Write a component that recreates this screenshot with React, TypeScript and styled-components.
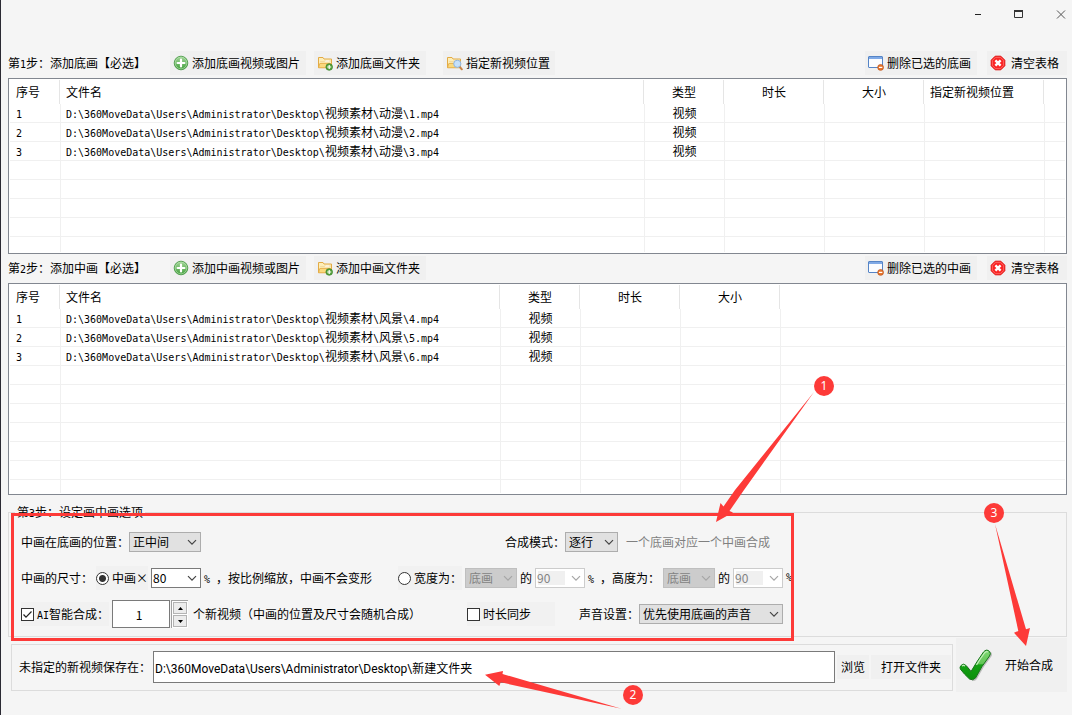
import React, { useState } from 'react';
import styled, { createGlobalStyle } from 'styled-components';

const RED = '#fd3a38';

const GlobalStyle = createGlobalStyle`
  * { box-sizing: border-box; }
  body {
    margin: 0;
    background: #f5f5f5;
  }
  body, button, input, select {
    font-family: 'Noto Sans CJK SC', 'Liberation Sans', sans-serif;
    font-size: 12px;
    line-height: 18px;
    color: #000;
  }
`;

const Window = styled.div`
  position: relative;
  display: flex;
  flex-direction: column;
  min-height: 100vh;
  padding: 0 5px 24px 7px;
  border-left: 1px solid #2b2a33;
  background: #f5f5f5;
  overflow: hidden;
`;

const TitleBar = styled.header`
  display: flex;
  justify-content: flex-end;
  gap: 27px;
  height: 49px;
  padding-top: 7px;
`;

const CaptionButton = styled.button`
  width: 14px;
  height: 14px;
  padding: 0;
  border: 0;
  background: none;
  svg { display: block; }
`;

const Toolbar = styled.div`
  display: flex;
  align-items: center;
  padding: 2px 0 3px;
`;

const StepTitle = styled.h2`
  width: 162px;
  margin: 0;
  font-size: 12px;
  font-weight: 400;
  line-height: 18px;
  white-space: nowrap;
`;

const ToolGroup = styled.div<{ $end?: boolean }>`
  display: flex;
  gap: ${p => (p.$end ? 10 : 8)}px;
  margin-left: ${p => (p.$end ? 'auto' : 0)};
`;

const ToolButton = styled.button<{ $w: number; $before?: number; $gap?: number }>`
  display: flex;
  align-items: center;
  gap: ${p => p.$gap ?? 3}px;
  width: ${p => p.$w}px;
  height: 24px;
  margin: 0 0 0 ${p => p.$before ?? 0}px;
  padding: 0 0 0 3px;
  border: 0;
  background: #f0f0f0;
  white-space: nowrap;
  svg { flex: none; }
`;

const ListView = styled.div`
  padding: 1px;
  border: 1px solid #828790;
  background: #fff;
`;

const Table = styled.table`
  width: 100%;
  table-layout: fixed;
  border-collapse: separate;
  border-spacing: 0;
`;

const Th = styled.th<{ $center?: boolean }>`
  height: 24px;
  padding: 0 5px 0 6px;
  border-right: 1px solid #e5e5e5;
  font-weight: 400;
  line-height: 18px;
  text-align: ${p => (p.$center ? 'center' : 'left')};
  white-space: nowrap;
  &:last-child { border-right: 0; }
`;

const Td = styled.td<{ $center?: boolean }>`
  height: 19px;
  padding: 0 5px;
  border-bottom: 1px solid #f0f0f0;
  line-height: 18px;
  text-align: ${p => (p.$center ? 'center' : 'left')};
  white-space: nowrap;
  & + & { border-left: 1px solid #f0f0f0; }
  &:first-child { padding-left: 6px; }
`;

const Tail = styled.tr<{ $h: number }>`
  td { height: ${p => p.$h}px; border-bottom: 0; }
`;

const Mono = styled.span`
  font-family: 'DejaVu Sans Mono', monospace;
  font-size: 10px;
  line-height: 10px;
  white-space: pre;
`;

const Options = styled.fieldset`
  min-width: 0;
  margin: 10px 0 0;
  padding: 5px 12px 4px;
  border: 1px solid #dcdcdc;
`;

const Legend = styled.legend`
  margin-left: -6px;
  padding: 0 2px;
  line-height: 13px;
`;

const Row = styled.div`
  display: flex;
  align-items: center;
  height: 36px;
  white-space: nowrap;
`;

const Cluster = styled.div<{ $w?: number; $tight?: boolean }>`
  display: flex;
  flex: none;
  align-items: center;
  gap: ${p => (p.$tight ? 0 : 3)}px;
  width: ${p => (p.$w ? p.$w + 'px' : 'auto')};
`;

const Choice = styled.label<{ $w?: number }>`
  display: flex;
  align-items: center;
  gap: 3px;
  width: ${p => (p.$w ? p.$w + 'px' : 'auto')};
  height: 24px;
  background: #f1f1f1;
`;

const Radio = styled.input.attrs({ type: 'radio' })`
  appearance: none;
  width: 13px;
  height: 13px;
  margin: 0;
  border: 1px solid #333;
  border-radius: 50%;
  background: #fff;
  &:checked { background: radial-gradient(circle, #333 0 3px, #fff 4px); }
`;

const CheckFrame = styled.span`
  position: relative;
  display: flex;
  svg {
    position: absolute;
    inset: 0;
    pointer-events: none;
  }
`;

const CheckInput = styled.input.attrs({ type: 'checkbox' })`
  appearance: none;
  width: 13px;
  height: 13px;
  margin: 0;
  border: 1px solid #333;
  background: #fff;
  &:not(:checked) + svg { display: none; }
`;

const Muted = styled.span`
  margin-left: 8px;
  color: #808080;
`;

const SelectFrame = styled.span<{ $w: number }>`
  position: relative;
  display: flex;
  width: ${p => p.$w}px;
  svg {
    position: absolute;
    right: 4px;
    top: 7px;
    pointer-events: none;
  }
`;

const SelectInput = styled.select<{ $editable?: boolean }>`
  appearance: none;
  width: 100%;
  height: 20px;
  padding: 0 0 0 ${p => (p.$editable ? 1 : 3)}px;
  border: 1px solid ${p => (p.$editable ? '#7a7a7a' : '#adadad')};
  border-radius: 0;
  background: ${p => (p.$editable ? '#fff' : '#e1e1e1')};
  &:disabled {
    border-color: ${p => (p.$editable ? '#cccccc' : '#bfbfbf')};
    background: ${p =>
      p.$editable ? 'linear-gradient(#f0f0f0, #f0f0f0) 2px 2px / 27px 14px no-repeat #fff' : '#cccccc'};
    color: #838383;
    opacity: 1;
  }
`;

const Spinner = styled.div`
  display: flex;
  align-items: center;
  gap: 1px;
  margin-right: 2px;
`;

const CountInput = styled.input`
  width: 58px;
  height: 28px;
  padding: 0 4px 0 0;
  border: 1px solid #7a7a7a;
  text-align: center;
`;

const Steps = styled.div`
  display: flex;
  flex-direction: column;
  gap: 1px;
  padding: 1px;
  background: #fff;
  border-left: 1px solid #a0a0a0;
  border-top: 1px solid #a0a0a0;
`;

const StepButton = styled.button`
  display: flex;
  align-items: center;
  justify-content: center;
  width: 14px;
  height: 12px;
  padding: 0;
  border: 1px solid #b4b4b4;
  background: #ececec;
`;

const Footer = styled.div`
  display: flex;
  align-items: center;
  gap: 3px;
  margin: 1px 0 0 3px;
`;

const SaveBox = styled.div`
  display: flex;
  flex: 1;
  align-items: center;
  gap: 2px;
  height: 47px;
  margin-top: 4px;
  padding: 0 1px 0 7px;
  border: 1px solid #dcdcdc;
  white-space: nowrap;
`;

const PathInput = styled.input`
  flex: 1;
  min-width: 0;
  height: 32px;
  padding: 0 1px;
  border: 1px solid #7a7a7a;
  font-family: Roboto, 'Noto Sans CJK SC', sans-serif;
`;

const PlainButton = styled.button<{ $w: number }>`
  width: ${p => p.$w}px;
  height: 24px;
  padding: 0;
  border: 0;
  background: #f0f0f0;
`;

const StartButton = styled.button`
  display: flex;
  align-items: center;
  gap: 12px;
  width: 111px;
  height: 54px;
  padding: 0 0 0 3px;
  border: 0;
  background: #f0f0f0;
  white-space: nowrap;
`;

const Highlight = styled.div`
  position: absolute;
  left: 10px;
  top: 513px;
  width: 783px;
  height: 128px;
  border: 3px solid ${RED};
  pointer-events: none;
`;

const Arrows = styled.svg`
  position: absolute;
  left: -1px;
  top: 0;
  pointer-events: none;
`;

const Badge = styled.span<{ $x: number; $y: number }>`
  position: absolute;
  left: ${p => p.$x}px;
  top: ${p => p.$y}px;
  width: 20px;
  height: 20px;
  border-radius: 50%;
  background: ${RED};
  color: #fff;
  font-family: 'Noto Sans', sans-serif;
  line-height: 20px;
  text-align: center;
`;

const AddIcon = () => (
  <svg width="16" height="16" viewBox="0 0 16 16" aria-hidden="true">
    <defs>
      <linearGradient id="ball" x1="0" y1="0" x2="0" y2="1">
        <stop offset="0" stopColor="#a5d79b" />
        <stop offset="1" stopColor="#3f9e3a" />
      </linearGradient>
    </defs>
    <circle cx="8" cy="8" r="6.8" fill="url(#ball)" stroke="#4b9a48" strokeWidth="0.9" />
    <circle cx="8" cy="8" r="5.8" fill="none" stroke="#b9e2b0" strokeWidth="0.6" />
    <path d="M8 4.6v6.800M4.600 8h6.800" stroke="#fff" strokeWidth="2.200" strokeLinecap="round" />
  </svg>
);

const Folder = () => (
  <>
    <path d="M1.500 12.500V2.500h4.500l1 1.500h7.500v8.500z" fill="#fdeeb8" stroke="#e3ab45" />
    <path d="M3.500 6.500h4l1-1.500h4.500v2H3.500z" fill="#fffdf2" stroke="#eccb80" strokeWidth="0.5" />
    <path d="M1.500 12.800 2.800 8.500H14.500v4.300z" fill="#fad97e" stroke="#e3ab45" strokeWidth="0.8" />
  </>
);

const FolderAddIcon = () => (
  <svg width="16" height="16" viewBox="0 0 16 16" aria-hidden="true">
    <Folder />
    <circle cx="12.200" cy="12" r="3.300" fill="#5aa53f" stroke="#347f26" strokeWidth="0.7" />
    <path d="M12.200 10v4M10.200 12h4" stroke="#fff" strokeWidth="1.200" />
  </svg>
);

const FolderFindIcon = () => (
  <svg width="17" height="16" viewBox="0 0 17 16" aria-hidden="true">
    <Folder />
    <path d="M13.800 11.800 15.800 14.300" stroke="#c98343" strokeWidth="2" strokeLinecap="round" />
    <circle cx="11.300" cy="8.800" r="3.600" fill="#c5e0fa" stroke="#8fb4dc" />
  </svg>
);

const RemoveIcon = () => (
  <svg width="16" height="16" viewBox="0 0 16 16" aria-hidden="true">
    <rect x="0.5" y="1.500" width="14" height="11" rx="0.5" fill="#fafcff" stroke="#5584c6" />
    <path d="M1 2h13v2H1z" fill="#7fa9e6" />
    <circle cx="12.600" cy="12.400" r="2.900" fill="#e8772e" stroke="#b9521a" strokeWidth="0.7" />
    <path d="M10.900 12.400h3.400" stroke="#fff" strokeWidth="1.200" />
  </svg>
);

const ClearIcon = () => (
  <svg width="16" height="16" viewBox="0 0 16 16" aria-hidden="true">
    <path d="M5.200 1.200h5.600L14.800 5.200v5.600L10.800 14.800H5.200L1.200 10.800V5.200z" fill="#fb2525" stroke="#e01010" strokeLinejoin="round" />
    <path d="M5.500 2.400h5L13.600 5.500v5L10.500 13.600h-5L2.400 10.500v-5z" fill="none" stroke="#ff7b74" strokeWidth="0.7" />
    <path d="m5.400 5.400 5.200 5.200M10.600 5.400l-5.200 5.200" stroke="#fff" strokeWidth="2.400" />
  </svg>
);

const BigCheck = () => (
  <svg width="34" height="34" viewBox="0 0 34 34" aria-hidden="true">
    <defs>
      <linearGradient id="tick" x1="0" y1="0" x2="0" y2="1">
        <stop offset="0" stopColor="#7fd873" />
        <stop offset="0.45" stopColor="#62c556" />
        <stop offset="0.5" stopColor="#12a012" />
        <stop offset="1" stopColor="#0b8f0b" />
      </linearGradient>
    </defs>
    <path d="M3 17.500Q5.500 14.800 8 17.500L13 23.500Q18.500 14 25.500 4Q28.500 .5 31.500 3.500Q33.300 5.500 31.500 8Q23.500 18 17.500 30Q14.500 34 11.500 31Q6 26 2.300 21Q1.500 19 3 17.500z" fill="#9a9a9a" opacity="0.6" transform="translate(.6 .8)" />
    <path d="M2 17.500Q4.500 14.800 7 17.500L12 23.500Q17.500 14 24.500 4Q27.500 .5 30.500 3.500Q32.300 5.500 30.500 8Q22.500 18 16.500 30Q13.500 33 10.500 31Q5 26 1.300 21Q.5 19 2 17.500z" fill="url(#tick)" stroke="#17761a" strokeWidth="1" />
    <path d="M3 18.200q1.500-1.500 3 0M17.500 17Q21 11 25.500 5q1.800-2 3.500-1" fill="none" stroke="#c4efbc" strokeWidth="1.200" />
  </svg>
);

const Chevron = ({ color }: { color: string }) => (
  <svg width="10" height="7" viewBox="0 0 10 7" aria-hidden="true">
    <path d="M1 1.200 5 5.200 9 1.200" fill="none" stroke={color} strokeWidth="1.200" />
  </svg>
);

type SelectProps = {
  label: string;
  width: number;
  options: string[];
  editable?: boolean;
  disabled?: boolean;
  id?: string;
};

const Select = ({ label, width, options, editable, disabled, id }: SelectProps) => (
  <SelectFrame $w={width}>
    <SelectInput id={id} aria-label={label} $editable={editable} disabled={disabled}>
      {options.map(o => (
        <option key={o}>{o}</option>
      ))}
    </SelectInput>
    <Chevron color={disabled ? '#a6a6a6' : '#444'} />
  </SelectFrame>
);

const CheckBox = ({ checked }: { checked?: boolean }) => (
  <CheckFrame>
    <CheckInput defaultChecked={checked} />
    <svg width="13" height="13" viewBox="0 0 13 13" aria-hidden="true">
      <path d="M2.500 6.500 5 9.200 10.500 3.500" fill="none" stroke="#222" strokeWidth="1.200" />
    </svg>
  </CheckFrame>
);

type Column = { title: string; width?: number; center?: boolean };

type FileListProps = {
  columns: Column[];
  folder: string;
  files: string[];
  blankRows: number;
  tail: number;
};

const FileList = ({ columns, folder, files, blankRows, tail }: FileListProps) => (
  <ListView>
    <Table>
      <colgroup>
        {columns.map((c, i) => (
          <col key={i} width={c.width} />
        ))}
      </colgroup>
      <thead>
        <tr>
          {columns.map((c, i) => (
            <Th key={i} $center={c.center}>{c.title}</Th>
          ))}
        </tr>
      </thead>
      <tbody>
        {files.map((file, row) => (
          <tr key={file}>
            <Td><Mono>{row + 1}</Mono></Td>
            <Td>
              <Mono>{'D:\\360MoveData\\Users\\Administrator\\Desktop\\'}</Mono>视频素材<Mono>{'\\'}</Mono>
              {folder}<Mono>{'\\' + file}</Mono>
            </Td>
            <Td $center>视频</Td>
            {columns.slice(3).map((_, i) => (
              <Td key={i} />
            ))}
          </tr>
        ))}
        {Array.from({ length: blankRows }, (_, r) => (
          <tr key={r}>
            {columns.map((_, i) => (
              <Td key={i} />
            ))}
          </tr>
        ))}
        <Tail $h={tail}>
          {columns.map((_, i) => (
            <Td key={i} />
          ))}
        </Tail>
      </tbody>
    </Table>
  </ListView>
);

const baseColumns: Column[] = [
  { title: '序号', width: 50 },
  { title: '文件名' },
  { title: '类型', width: 80, center: true },
  { title: '时长', width: 100, center: true },
  { title: '大小', width: 100, center: true },
  { title: '指定新视频位置', width: 120 },
  { title: '', width: 21 },
];

const middleColumns: Column[] = [
  { title: '序号', width: 50 },
  { title: '文件名', width: 440 },
  { title: '类型', width: 80, center: true },
  { title: '时长', width: 100, center: true },
  { title: '大小', width: 100, center: true },
  { title: '' },
];

export default function App() {
  const [count, setCount] = useState(1);
  const [savePath, setSavePath] = useState('D:\\360MoveData\\Users\\Administrator\\Desktop\\新建文件夹');

  return (
    <Window>
      <GlobalStyle />
      <TitleBar>
        <CaptionButton aria-label="最小化">
          <svg width="14" height="14" viewBox="0 0 14 14"><path d="M4 7.500h6" stroke="#222" /></svg>
        </CaptionButton>
        <CaptionButton aria-label="最大化">
          <svg width="14" height="14" viewBox="0 0 14 14">
            <path d="M2.500 3.500h8v7h-8z" fill="none" stroke="#333" />
            <path d="M2 4h9" stroke="#333" strokeWidth="2" />
          </svg>
        </CaptionButton>
        <CaptionButton aria-label="关闭">
          <svg width="14" height="14" viewBox="0 0 14 14"><path d="m4 3.500 8 8M12 3.500l-8 8" stroke="#555" /></svg>
        </CaptionButton>
      </TitleBar>

      <Toolbar>
        <StepTitle>第<Mono>1</Mono>步：添加底画【必选】</StepTitle>
        <ToolGroup>
          <ToolButton $w={136}><AddIcon />添加底画视频或图片</ToolButton>
          <ToolButton $w={112}><FolderAddIcon />添加底画文件夹</ToolButton>
          <ToolButton $w={112} $before={9}><FolderFindIcon />指定新视频位置</ToolButton>
        </ToolGroup>
        <ToolGroup $end>
          <ToolButton $w={112}><RemoveIcon />删除已选的底画</ToolButton>
          <ToolButton $w={80} $gap={5}><ClearIcon />清空表格</ToolButton>
        </ToolGroup>
      </Toolbar>
      <FileList columns={baseColumns} folder="动漫" files={['1.mp4', '2.mp4', '3.mp4']} blankRows={4} tail={15} />

      <Toolbar>
        <StepTitle>第<Mono>2</Mono>步：添加中画【必选】</StepTitle>
        <ToolGroup>
          <ToolButton $w={136}><AddIcon />添加中画视频或图片</ToolButton>
          <ToolButton $w={112}><FolderAddIcon />添加中画文件夹</ToolButton>
        </ToolGroup>
        <ToolGroup $end>
          <ToolButton $w={112}><RemoveIcon />删除已选的中画</ToolButton>
          <ToolButton $w={80} $gap={5}><ClearIcon />清空表格</ToolButton>
        </ToolGroup>
      </Toolbar>
      <FileList columns={middleColumns} folder="风景" files={['4.mp4', '5.mp4', '6.mp4']} blankRows={6} tail={13} />

      <Options>
        <Legend>第<Mono>3</Mono>步：设定画中画选项</Legend>
        <Row>
          <Cluster $w={484} $tight>
            <label htmlFor="position">中画在底画的位置：</label>
            <Select id="position" label="中画在底画的位置" width={72} options={['正中间']} />
          </Cluster>
          <Cluster $tight>
            <label htmlFor="mode">合成模式：</label>
            <Select id="mode" label="合成模式" width={53} options={['逐行']} />
            <Muted>一个底画对应一个中画合成</Muted>
          </Cluster>
        </Row>
        <Row>
          <Cluster $w={377}>
            <span>中画的尺寸：</span>
            <Choice><Radio name="size" defaultChecked />中画×</Choice>
            <Select label="中画比例" width={50} options={['80']} editable />
            <span><Mono>{'% '}</Mono>，按比例缩放，中画不会变形</span>
          </Cluster>
          <Cluster>
            <Choice><Radio name="size" />宽度为：</Choice>
            <Select label="宽度基准" width={52} options={['底画']} disabled />
            <span>的</span>
            <Select label="宽度百分比" width={50} options={['90']} editable disabled />
            <span><Mono>{'% '}</Mono>，高度为：</span>
            <Select label="高度基准" width={52} options={['底画']} disabled />
            <span>的</span>
            <Select label="高度百分比" width={50} options={['90']} editable disabled />
            <Mono>%</Mono>
          </Cluster>
        </Row>
        <Row>
          <Cluster $w={446}>
            <Choice><CheckBox checked /><span><Mono>AI</Mono>智能合成：</span></Choice>
            <Spinner>
              <CountInput aria-label="新视频数量" value={count} onChange={e => setCount(Number(e.target.value) || 0)} />
              <Steps>
                <StepButton aria-label="增加" onClick={() => setCount(count + 1)}>
                  <svg width="5" height="3" viewBox="0 0 5 3"><path d="M0 3 2.500 0 5 3z" /></svg>
                </StepButton>
                <StepButton aria-label="减少" onClick={() => setCount(Math.max(1, count - 1))}>
                  <svg width="5" height="3" viewBox="0 0 5 3"><path d="M0 0 2.500 3 5 0z" /></svg>
                </StepButton>
              </Steps>
            </Spinner>
            <span>个新视频（中画的位置及尺寸会随机合成）</span>
          </Cluster>
          <Cluster $w={112}>
            <Choice $w={88}><CheckBox />时长同步</Choice>
          </Cluster>
          <Cluster $tight>
            <label htmlFor="sound">声音设置：</label>
            <Select id="sound" label="声音设置" width={144} options={['优先使用底画的声音']} />
          </Cluster>
        </Row>
      </Options>

      <Footer>
        <SaveBox>
          <label htmlFor="save">未指定的新视频保存在：</label>
          <PathInput id="save" value={savePath} onChange={e => setSavePath(e.target.value)} />
          <PlainButton $w={32}>浏览</PlainButton>
          <PlainButton $w={80}>打开文件夹</PlainButton>
        </SaveBox>
        <StartButton><BigCheck />开始合成</StartButton>
      </Footer>

      <Highlight />
      <Arrows width="1072" height="715" viewBox="0 0 1072 715" fill={RED} aria-hidden="true">
        <path d="M814 392 735 490 723.500 506.500 720.500 503 716 522 733 512.500 729.500 511 744 490z" />
        <path d="M621.500 708.800 502.500 674 503 671 485 674.700 499.300 686 500.700 682.300z" />
        <path d="M995 524 1018.300 631 1014 632.700 1026 646 1030 628 1026 629.300z" />
      </Arrows>
      <Badge $x={813} $y={376}>1</Badge>
      <Badge $x={622} $y={685}>2</Badge>
      <Badge $x={983} $y={503}>3</Badge>
    </Window>
  );
}
